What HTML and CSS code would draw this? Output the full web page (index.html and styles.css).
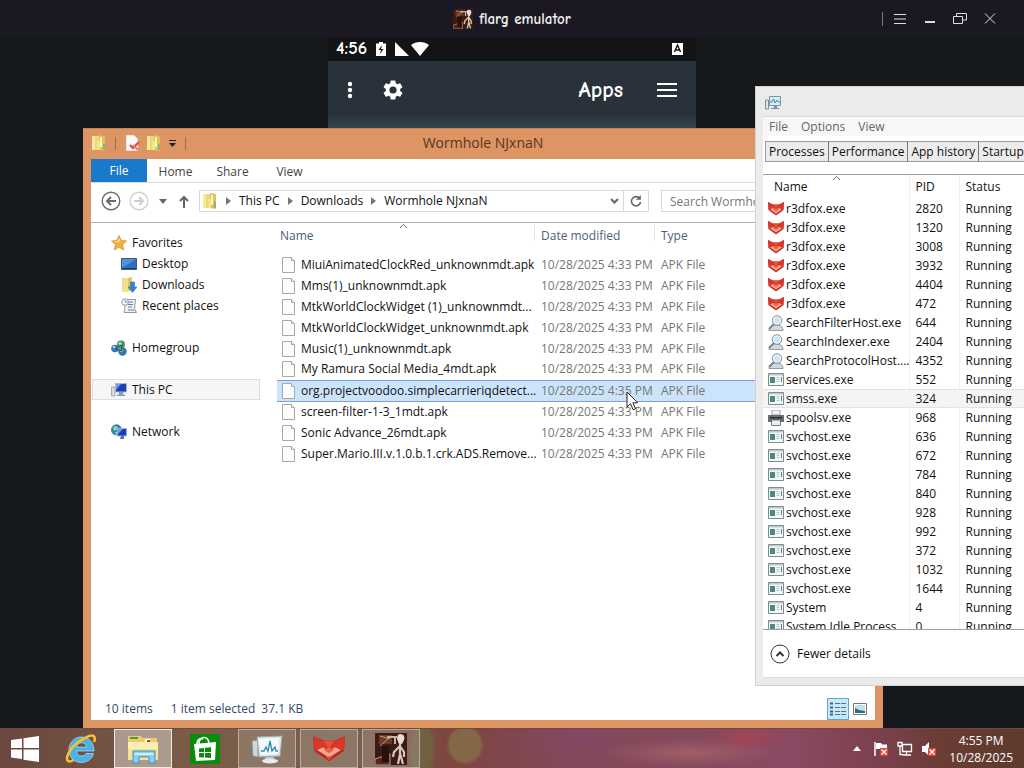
FILE: index.html
```html
<!DOCTYPE html>
<html lang="en">
<head>
<meta charset="utf-8">
<title>flarg emulator</title>
<link rel="stylesheet" href="styles.css">
</head>
<body>

<!-- icons -->
<svg class="sprite" width="0" height="0">
  <symbol id="folder" viewBox="0 0 16 16">
    <path d="M1 1h7v14H1z" fill="#ecd974"/><path d="M1 1h3v14H1z" fill="#f6eaa0"/><path d="M8 0l6 1v15l-6-1z" fill="#dcc25a"/><path d="M9 2h2v10H9z" fill="#fbf3c0"/><path d="M6 6h3v9H6z" fill="#f4e48e"/><path d="M12 9h2v6h-2z" fill="#8fb27d"/>
  </symbol>
  <symbol id="page" viewBox="0 0 16 16">
    <path d="M1.500.5h9l3 3v12h-12z" fill="#fcfcfc" stroke="#a8a8a8"/><path d="M10.500.5v3h3" fill="#eee" stroke="#a8a8a8"/>
  </symbol>
  <symbol id="props" viewBox="0 0 16 16">
    <path d="M2 0h8l4 4v12H2z" fill="#fafafa" stroke="#b9b9b9" stroke-width=".6"/><path d="M6 10l3 3 6-6" fill="none" stroke="#e0514b" stroke-width="2.400"/><path d="M9 10l5 5" stroke="#e67c76" stroke-width="2"/>
  </symbol>
  <symbol id="star" viewBox="0 0 16 16">
    <path d="M8 .5l2.300 4.900 5.200.6-3.900 3.600 1.100 5.400L8 12.300 3.300 15l1.100-5.400L.5 6l5.200-.6z" fill="#f5ae3d" stroke="#d68a24" stroke-width=".7"/><path d="M8 2.500l1.500 4-3 1-4-1 4-.5z" fill="#fcdc8a"/>
  </symbol>
  <symbol id="desktop" viewBox="0 0 16 16">
    <path d="M.5 2.500h15v11H.5z" fill="#2f6fc0" stroke="#44576e"/><path d="M1 3h14L1 12z" fill="#4f92dd"/><path d="M1 12h14v1H1z" fill="#233a58"/>
  </symbol>
  <symbol id="downloads" viewBox="0 0 16 16">
    <path d="M1 1h6v14H1z" fill="#f1e08a"/><path d="M7 1l4-1v13l-4 1z" fill="#dfc662"/><path d="M9.500 5h4v5H16l-4.500 5.500L7 10h2.500z" fill="#3585cf" stroke="#2467a8" stroke-width=".5"/>
  </symbol>
  <symbol id="recent" viewBox="0 0 16 16">
    <path d="M3 1.500h11.500l-1 9 2 4H3l1-4z" fill="#eef2f5" stroke="#8c9aa6"/><path d="M7 4h5M7 6.500h5M7 9h4M7 12h6" stroke="#6f8191"/><circle cx="4" cy="4" r="3.300" fill="#fff" stroke="#8c9aa6"/><path d="M4 2v2h2" fill="none" stroke="#6a88a2"/>
  </symbol>
  <symbol id="homegroup" viewBox="0 0 16 16">
    <circle cx="4" cy="8.500" r="3.800" fill="#3a74bd"/><circle cx="10" cy="4.500" r="4" fill="#3f8f70"/><circle cx="11.500" cy="11.500" r="4.200" fill="#3478a8"/><circle cx="9" cy="3.500" r="1.600" fill="#b9e0bd"/><circle cx="10.500" cy="10.500" r="1.600" fill="#a8d7e6"/><circle cx="3" cy="7" r="1.300" fill="#b4d2f0"/><path d="M5 9l5-4 1 6z" fill="#5bb06a" stroke="#244f4b"/>
  </symbol>
  <symbol id="pc" viewBox="0 0 16 16">
    <path d="M.5 5h3.500v9H.5z" fill="#d5dce3" stroke="#8795a3" stroke-width=".7"/><path d="M4.500 1.500h11v8.500h-11z" fill="#1f3fb5" stroke="#aab9ca"/><path d="M5 2h5l-5 6z" fill="#6f9ce8"/><path d="M8 10h4v2.500h2V14H6v-1.500h2z" fill="#8d9cad"/>
  </symbol>
  <symbol id="network" viewBox="0 0 16 16">
    <circle cx="5.500" cy="5.800" r="5.500" fill="#2f86b0"/><path d="M2 3l4-1 1 3-4 2zM4 8l3 0-2 3z" fill="#91d8b0"/><path d="M6.500 4.500h9v7.500h-9z" fill="#1b3cb8" stroke="#9db4cf"/><path d="M7 5h5l-5 5z" fill="#6f96e6"/><path d="M10 12h3v3h-4v-1.500h1z" fill="#5f7183"/>
  </symbol>
  <symbol id="fox" viewBox="0 0 16 16" preserveAspectRatio="none">
    <path d="M0 1l5 2.500h6L16 1l-.5 8L8 14.500.5 9z" fill="#b92a1e"/><path d="M0 1l5 2.800L8 8 3.500 7.500.8 9z" fill="#d8372a"/><path d="M16 1l-5 2.800L8 8l4.500-.5 2.700 1.500z" fill="#d8372a"/><path d="M5 3.500h6L8 8z" fill="#e5503f"/><path d="M2 8.500l3-1.500L8 9l3-2 3 1.500L8 12.500z" fill="#f6a48c"/><path d="M5.500 8.500L8 7l2.500 1.500L8 10.300z" fill="#e8614c"/><path d="M6 12h4l-2 2z" fill="#e04a38"/>
  </symbol>
  <symbol id="searcher" viewBox="0 0 16 16">
    <path d="M1 15.500c0-4 3-5.500 7-5.500s7 1.500 7 5.500z" fill="#d5d9dc" stroke="#80868b" stroke-width=".8"/><circle cx="9" cy="5.500" r="4.800" fill="#e9f3fa" stroke="#858f98"/><circle cx="9" cy="5.500" r="3" fill="#cfe3f2"/><path d="M6 9l-5 5" stroke="#7b858e" stroke-width="2"/>
  </symbol>
  <symbol id="exe" viewBox="0 0 16 16">
    <path d="M.5 1.500h15v12H.5z" fill="#f5f8f8" stroke="#7e8c93"/><path d="M1 2h14v1.500H1z" fill="#bdc9ce"/><path d="M2 5h5v6H2z" fill="#4a8a80"/><path d="M8.500 5.500h3M8.500 7.500h3M8.500 9.500h3" stroke="#b3c8c5"/><path d="M13.500 5v5" stroke="#5a7f89"/>
  </symbol>
  <symbol id="printer" viewBox="0 0 16 16">
    <path d="M4 0h8v5H4z" fill="#f5f6f7" stroke="#7d8285" stroke-width=".8"/><path d="M0 5h16v7H0z" fill="#6b6f72"/><path d="M2 7h12v1.500H2z" fill="#303335"/><path d="M3.500 10h9v5.500h-9z" fill="#eceeef" stroke="#55595c" stroke-width=".8"/>
  </symbol>
  <symbol id="monitor" viewBox="0 0 32 32">
    <path d="M1 8l6-1v17l-5-1z" fill="#cfd8db" stroke="#8b989d"/><path d="M6 4l25-1-2 20-21 1z" fill="#dfe6e8" stroke="#9aa7ab"/><path d="M8 6l20-1-1 16-17 1z" fill="#f2fafb"/><path d="M10 18h3l2-4 2 4 2-10 2 10 3-4 1 4h2" fill="none" stroke="#3d8cae" stroke-width="1.400"/><path d="M14 24h9v3h-9z" fill="#b8c4c8"/><ellipse cx="19" cy="28" rx="8" ry="2.500" fill="#e6ecee"/>
  </symbol>
  <symbol id="monitor-s" viewBox="0 0 16 16">
    <path d="M.5 5h3v9h-3z" fill="#dfe6e8" stroke="#7f8f96"/><path d="M4.500 1.500h11v9h-11z" fill="#d5eef5" stroke="#7f97a0"/><path d="M5 7h2l1.500-3L10 8l2-3 1.500 2H15" fill="none" stroke="#3d8cae"/><path d="M9 11h3v2h2v1H6v-1h3z" fill="#7f9299"/>
  </symbol>
  <symbol id="flarg" viewBox="0 0 32 32">
    <path d="M0 0h32v32H0z" fill="#3b1c15"/><path d="M4 2h13v9H4z" fill="#6c3a27"/><path d="M5 3l10 3M5 13l10-9M0 26l15-5v11H0z" stroke="#c49a83" fill="#572617"/><path d="M7 13h7v16H7z" fill="#25100c"/><path d="M12 4h10M20 3v8" stroke="#c9b3a6" stroke-width="2"/><path d="M25 1c4 0 5 3 4 6l-2 4h-3l-2-5c0-3 1-5 3-5z" fill="#e8ddd2"/><path d="M25 10v11l-2 10M25 20l3 11M25 13l-6 6-1 5M25 13l4 6v5" fill="none" stroke="#d8c6b8" stroke-width="2.200"/>
  </symbol>
  <symbol id="badx" viewBox="0 0 8 8">
    <path d="M0 0h8v8H0z" fill="#d9463e"/><path d="M1.500 1.500l5 5M6.500 1.500l-5 5" stroke="#fff" stroke-width="1.400"/>
  </symbol>
</svg>

<header class="emu-bar">
  <div class="emu-title"><svg width="20" height="20"><use href="#flarg"/></svg>flarg emulator</div>
  <div class="emu-btns">
    <button aria-label="Menu"><svg width="14" height="14" viewBox="0 0 14 14"><path d="M1 2.500h12M1 7h12M1 11.500h12"/></svg></button>
    <button aria-label="Minimize"><svg width="14" height="14" viewBox="0 0 14 14"><path d="M2 10h10" stroke-width="2"/></svg></button>
    <button aria-label="Restore"><svg width="14" height="14" viewBox="0 0 14 14"><path d="M.5 4.500h9v7h-9zM3.500 4V1.500h10v6.500H10"/></svg></button>
    <button aria-label="Close"><svg width="14" height="14" viewBox="0 0 14 14"><path d="M2 1.500l10 10M12 1.500l-10 10"/></svg></button>
  </div>
</header>

<main class="screen">

  <section class="phone">
    <div class="phone-status">
      <span>4:56</span>
      <svg width="10" height="14" viewBox="0 0 10 14"><path d="M3 0h4v1.500h3V14H0V1.500h3z" fill="#fff"/><path d="M6 3L2.500 8H5l-1 4 3.500-5H5z" fill="#111"/></svg>
      <svg class="signal" width="34" height="14" viewBox="0 0 34 14"><path d="M0 0v14h14z" fill="#fff"/><path d="M16 3c5-4 13-4 18 0l-9 11z" fill="#fff"/></svg>
      <svg class="kbd" width="11" height="12" viewBox="0 0 11 12"><path d="M0 0h11v12H0z" fill="#fff"/><path d="M2.500 9l3-7 3 7M3.500 7h4" fill="none" stroke="#111" stroke-width="1.400"/></svg>
    </div>
    <div class="phone-head">
      <button aria-label="More"><svg width="6" height="18" viewBox="0 0 6 18"><circle cx="3" cy="3" r="2.200"/><circle cx="3" cy="9" r="2.200"/><circle cx="3" cy="15" r="2.200"/></svg></button>
      <button aria-label="Settings"><svg width="24" height="24" viewBox="0 0 24 24"><path d="M19.140 12.940c.04-.3.060-.61.060-.94s-.02-.64-.07-.94l2.030-1.580a.49.49 0 0 0 .12-.61l-1.920-3.320a.49.49 0 0 0-.59-.22l-2.390.96a7 7 0 0 0-1.620-.94l-.36-2.540a.48.48 0 0 0-.48-.41h-3.840a.48.48 0 0 0-.47.41l-.36 2.540c-.59.24-1.130.57-1.620.94l-2.390-.96a.48.48 0 0 0-.59.22L2.740 8.870a.48.48 0 0 0 .12.61l2.030 1.580c-.05.3-.09.63-.09.94s.02.64.07.94l-2.030 1.580a.49.49 0 0 0-.12.61l1.920 3.320c.12.22.37.29.59.22l2.390-.96c.5.38 1.030.7 1.620.94l.36 2.540c.05.24.24.41.48.41h3.840c.24 0 .44-.17.470-.41l.36-2.540c.59-.24 1.130-.56 1.620-.94l2.390.96c.22.08.47 0 .59-.22l1.920-3.320a.48.48 0 0 0-.12-.61zM12 15.600A3.600 3.600 0 1 1 12 8.400a3.600 3.600 0 0 1 0 7.200z"/></svg></button>
      <h1>Apps</h1>
      <button aria-label="Menu"><svg width="20" height="14" viewBox="0 0 20 14"><path d="M0 0h20v2H0zM0 6h20v2H0zM0 12h20v2H0z"/></svg></button>
    </div>
  </section>

  <section class="explorer">
    <div class="ex-title">
      <div class="quick">
        <svg width="16" height="16"><use href="#folder"/></svg><i></i>
        <svg width="16" height="16"><use href="#props"/></svg>
        <svg width="16" height="16"><use href="#folder"/></svg>
        <svg width="9" height="9" viewBox="0 0 9 9"><path d="M1 1.500h7" stroke="#222"/><path d="M1 4h7L4.500 8z" fill="#222"/></svg><i></i>
      </div>
      <h2>Wormhole NJxnaN</h2>
    </div>
    <div class="ex-body">
      <nav class="ribbon">
        <button class="file">File</button>
        <button>Home</button>
        <button>Share</button>
        <button>View</button>
      </nav>
      <div class="address">
        <button aria-label="Back"><svg width="20" height="20" viewBox="0 0 20 20" fill="none" stroke="#6b6b6b"><circle cx="10" cy="10" r="8.800" stroke-width="1.400"/><path d="M15 10H6M10 6l-4 4 4 4" stroke-width="2"/></svg></button>
        <button aria-label="Forward"><svg width="20" height="20" viewBox="0 0 20 20" fill="none" stroke="#cfcfcf"><circle cx="10" cy="10" r="8.800" stroke-width="1.400"/><path d="M5 10h9M10 6l4 4-4 4" stroke-width="2"/></svg></button>
        <button class="hist" aria-label="Recent locations"><svg width="8" height="5" viewBox="0 0 8 5"><path d="M0 0h8L4 5z" fill="#666"/></svg></button>
        <button class="up" aria-label="Up"><svg width="10" height="13" viewBox="0 0 10 13" fill="none" stroke="#666" stroke-width="2"><path d="M5 13V2M1 6l4-4 4 4"/></svg></button>
        <div class="crumbs">
          <svg width="16" height="16"><use href="#folder"/></svg>
          <svg class="arr" width="5" height="8" viewBox="0 0 5 8"><path d="M0 0l5 4-5 4z"/></svg><a href="#">This PC</a>
          <svg class="arr" width="5" height="8" viewBox="0 0 5 8"><path d="M0 0l5 4-5 4z"/></svg><a href="#">Downloads</a>
          <svg class="arr" width="5" height="8" viewBox="0 0 5 8"><path d="M0 0l5 4-5 4z"/></svg><a href="#">Wormhole NJxnaN</a>
          <button class="drop" aria-label="Previous locations"><svg width="9" height="6" viewBox="0 0 9 6"><path d="M1 1l3.500 3.500L8 1" fill="none" stroke="#666" stroke-width="2"/></svg></button>
          <button class="refresh" aria-label="Refresh"><svg width="12" height="12" viewBox="0 0 12 12"><path d="M9.500 3.200A4.600 4.600 0 1 0 10.600 7" fill="none" stroke="#666" stroke-width="1.600"/><path d="M10.800 0v4.800H6z" fill="#666"/></svg></button>
        </div>
        <input class="search" type="text" placeholder="Search Wormhole NJxnaN" aria-label="Search">
      </div>
      <div class="panes">
        <ul class="tree">
          <li><svg width="16" height="16"><use href="#star"/></svg>Favorites</li>
          <li class="sub"><svg width="16" height="16"><use href="#desktop"/></svg>Desktop</li>
          <li class="sub"><svg width="16" height="16"><use href="#downloads"/></svg>Downloads</li>
          <li class="sub"><svg width="16" height="16"><use href="#recent"/></svg>Recent places</li>
          <li class="top"><svg width="16" height="16"><use href="#homegroup"/></svg>Homegroup</li>
          <li class="top on"><svg width="16" height="16"><use href="#pc"/></svg>This PC</li>
          <li class="top"><svg width="16" height="16"><use href="#network"/></svg>Network</li>
        </ul>
        <div class="list">
        <table class="files">
          <colgroup><col class="c-name"><col class="c-date"><col></colgroup>
          <thead>
            <tr><th>Name<svg class="sort" width="7" height="4" viewBox="0 0 7 4"><path d="M0 4l3.500-3.500L7 4" fill="none" stroke="#667"/></svg></th><th>Date modified</th><th>Type</th></tr>
          </thead>
          <tbody>
            <tr><td><svg width="16" height="16"><use href="#page"/></svg>MiuiAnimatedClockRed_unknownmdt.apk</td><td>10/28/2025 4:33 PM</td><td>APK File</td></tr>
            <tr><td><svg width="16" height="16"><use href="#page"/></svg>Mms(1)_unknownmdt.apk</td><td>10/28/2025 4:33 PM</td><td>APK File</td></tr>
            <tr><td><svg width="16" height="16"><use href="#page"/></svg>MtkWorldClockWidget (1)_unknownmdt...</td><td>10/28/2025 4:33 PM</td><td>APK File</td></tr>
            <tr><td><svg width="16" height="16"><use href="#page"/></svg>MtkWorldClockWidget_unknownmdt.apk</td><td>10/28/2025 4:33 PM</td><td>APK File</td></tr>
            <tr><td><svg width="16" height="16"><use href="#page"/></svg>Music(1)_unknownmdt.apk</td><td>10/28/2025 4:33 PM</td><td>APK File</td></tr>
            <tr><td><svg width="16" height="16"><use href="#page"/></svg>My Ramura Social Media_4mdt.apk</td><td>10/28/2025 4:33 PM</td><td>APK File</td></tr>
            <tr class="on"><td><svg width="16" height="16"><use href="#page"/></svg>org.projectvoodoo.simplecarrieriqdetect...</td><td>10/28/2025 4:35 PM</td><td>APK File</td></tr>
            <tr><td><svg width="16" height="16"><use href="#page"/></svg>screen-filter-1-3_1mdt.apk</td><td>10/28/2025 4:33 PM</td><td>APK File</td></tr>
            <tr><td><svg width="16" height="16"><use href="#page"/></svg>Sonic Advance_26mdt.apk</td><td>10/28/2025 4:33 PM</td><td>APK File</td></tr>
            <tr><td><svg width="16" height="16"><use href="#page"/></svg>Super.Mario.III.v.1.0.b.1.crk.ADS.Remove...</td><td>10/28/2025 4:33 PM</td><td>APK File</td></tr>
          </tbody>
        </table>
        </div>
      </div>
      <div class="ex-status">
        <span>10 items</span><span>1 item selected</span><span>37.1 KB</span>
        <div class="views">
          <button class="on" aria-label="Details"><svg width="16" height="14" viewBox="0 0 16 14"><path d="M0 1.500h3M0 5.500h3M0 9.500h3M0 12.500h3" stroke="#466" stroke-width="2"/><path d="M5 1.500h5M5 5.500h5M5 9.500h5M5 12.500h5M11 1.500h5M11 5.500h5M11 9.500h5M11 12.500h5" stroke="#5b7480"/></svg></button>
          <button aria-label="Large icons"><svg width="14" height="12" viewBox="0 0 14 12"><path d="M.5.5h13v11H.5z" fill="#fff" stroke="#777"/><path d="M2 2h10v8H2z" fill="#bfe0ee"/><path d="M2 5l4 2 6 1v2H2z" fill="#36687c"/></svg></button>
        </div>
      </div>
    </div>
  </section>

  <section class="taskmgr">
    <div class="tm-title"><svg width="16" height="16"><use href="#monitor-s"/></svg></div>
    <div class="tm-body">
      <div class="tm-menu"><button>File</button><button>Options</button><button>View</button></div>
      <div class="tm-tabs"><button>Processes</button><button>Performance</button><button>App history</button><button>Startup</button></div>
      <div class="tm-list">
        <table>
          <colgroup><col class="c-proc"><col class="c-pid"><col></colgroup>
          <thead>
            <tr><th>Name<svg class="sort" width="7" height="4" viewBox="0 0 7 4"><path d="M0 4l3.500-3.500L7 4" fill="none" stroke="#667"/></svg></th><th>PID</th><th>Status</th></tr>
          </thead>
          <tbody>
            <tr><td><svg width="16" height="16"><use href="#fox"/></svg>r3dfox.exe</td><td>2820</td><td>Running</td></tr>
            <tr><td><svg width="16" height="16"><use href="#fox"/></svg>r3dfox.exe</td><td>1320</td><td>Running</td></tr>
            <tr><td><svg width="16" height="16"><use href="#fox"/></svg>r3dfox.exe</td><td>3008</td><td>Running</td></tr>
            <tr><td><svg width="16" height="16"><use href="#fox"/></svg>r3dfox.exe</td><td>3932</td><td>Running</td></tr>
            <tr><td><svg width="16" height="16"><use href="#fox"/></svg>r3dfox.exe</td><td>4404</td><td>Running</td></tr>
            <tr><td><svg width="16" height="16"><use href="#fox"/></svg>r3dfox.exe</td><td>472</td><td>Running</td></tr>
            <tr><td><svg width="16" height="16"><use href="#searcher"/></svg>SearchFilterHost.exe</td><td>644</td><td>Running</td></tr>
            <tr><td><svg width="16" height="16"><use href="#searcher"/></svg>SearchIndexer.exe</td><td>2404</td><td>Running</td></tr>
            <tr><td><svg width="16" height="16"><use href="#searcher"/></svg>SearchProtocolHost....</td><td>4352</td><td>Running</td></tr>
            <tr><td><svg width="16" height="16"><use href="#exe"/></svg>services.exe</td><td>552</td><td>Running</td></tr>
            <tr class="on"><td><svg width="16" height="16"><use href="#exe"/></svg>smss.exe</td><td>324</td><td>Running</td></tr>
            <tr><td><svg width="16" height="16"><use href="#printer"/></svg>spoolsv.exe</td><td>968</td><td>Running</td></tr>
            <tr><td><svg width="16" height="16"><use href="#exe"/></svg>svchost.exe</td><td>636</td><td>Running</td></tr>
            <tr><td><svg width="16" height="16"><use href="#exe"/></svg>svchost.exe</td><td>672</td><td>Running</td></tr>
            <tr><td><svg width="16" height="16"><use href="#exe"/></svg>svchost.exe</td><td>784</td><td>Running</td></tr>
            <tr><td><svg width="16" height="16"><use href="#exe"/></svg>svchost.exe</td><td>840</td><td>Running</td></tr>
            <tr><td><svg width="16" height="16"><use href="#exe"/></svg>svchost.exe</td><td>928</td><td>Running</td></tr>
            <tr><td><svg width="16" height="16"><use href="#exe"/></svg>svchost.exe</td><td>992</td><td>Running</td></tr>
            <tr><td><svg width="16" height="16"><use href="#exe"/></svg>svchost.exe</td><td>372</td><td>Running</td></tr>
            <tr><td><svg width="16" height="16"><use href="#exe"/></svg>svchost.exe</td><td>1032</td><td>Running</td></tr>
            <tr><td><svg width="16" height="16"><use href="#exe"/></svg>svchost.exe</td><td>1644</td><td>Running</td></tr>
            <tr><td><svg width="16" height="16"><use href="#exe"/></svg>System</td><td>4</td><td>Running</td></tr>
            <tr><td><svg width="16" height="16"><use href="#exe"/></svg>System Idle Process</td><td>0</td><td>Running</td></tr>
          </tbody>
        </table>
      </div>
      <div class="tm-foot">
        <button><svg width="20" height="20" viewBox="0 0 20 20" fill="none" stroke="#333"><circle cx="10" cy="10" r="9"/><path d="M6.500 12L10 8.500l3.500 3.500" stroke-width="2"/></svg>Fewer details</button>
      </div>
    </div>
  </section>

  <svg class="cursor" width="13" height="20" viewBox="0 0 13 20"><path d="M1 1v15l3.500-3.300 2.600 6 2.400-1-2.600-5.900h4.800z" fill="#fff" stroke="#222"/></svg>
</main>

<footer class="taskbar">
  <button class="tb start" aria-label="Start"><svg width="28" height="26" viewBox="0 0 28 26"><path d="M0 4l11-1.600V12H0zM12.500 2.200L28 0v12H12.500zM0 13.500h11V23L0 21.600zM12.500 13.500H28V26l-15.500-2.200z" fill="#fff"/></svg></button>
  <button class="tb" aria-label="Internet Explorer"><svg width="32" height="32" viewBox="0 0 32 32"><path d="M29 18H11.500c.3 3.200 2.300 5 5 5 2 0 3.500-1 4.500-2.500h7.500C27 26 22.500 29.500 16.500 29.500 9 29.500 4 24.300 4 17S9.200 4 16.500 4 29 9.500 29 18zM11.700 14h10c-.3-2.500-2.200-4.200-5-4.200s-4.600 1.700-5 4.200z" fill="#48b3e8" stroke="#b5e4f8" stroke-width=".7"/><path d="M29 9c2-5 0-8-6-5.500C14 7 5 15 2.500 23c-1.500 5 1 7 6 4" fill="none" stroke="#f5c22d" stroke-width="2.600"/></svg></button>
  <button class="tb run active" aria-label="File Explorer"><svg width="32" height="32" viewBox="0 0 32 32"><path d="M1 3h13l2 2h14v8H1z" fill="#e8cf6c"/><path d="M3 4h8v2H3z" fill="#3f9b53"/><path d="M18 6h5v3h-5z" fill="#fff"/><path d="M20 7h3v2h-3z" fill="#b8402f"/><path d="M1 9h30v18H1z" fill="#f4e38f"/><path d="M1 9h30v7H1z" fill="#faefb0"/><path d="M6 18h22v12h-6v-6H12v6H6z" fill="#8ccdf0" stroke="#3b93ca"/><path d="M8 20h18v2H8z" fill="#d3eefb"/></svg></button>
  <button class="tb" aria-label="Store"><svg width="30" height="30" viewBox="0 0 30 30"><path d="M0 0h30v30H0z" fill="#0c8a0c"/><path d="M4 10l22-2-1 18-19 1z" fill="#fff"/><path d="M9 10c0-8 9-9 10-1M7 10c0-5 4-6 6-5" fill="none" stroke="#fff" stroke-width="1.600"/><path d="M9 14.500l5-.6v4H9zM15 13.800l6-.6v4.700h-6zM9 19h5v4.500l-5-.3zM15 19h6v5l-6-.4z" fill="#0c8a0c"/></svg></button>
  <button class="tb run" aria-label="Task Manager"><svg width="32" height="32"><use href="#monitor"/></svg></button>
  <button class="tb run" aria-label="r3dfox"><svg width="32" height="30"><use href="#fox"/></svg></button>
  <button class="tb run" aria-label="flarg emulator"><svg width="32" height="32"><use href="#flarg"/></svg></button>
  <div class="tray">
    <svg width="8" height="5" viewBox="0 0 8 5"><path d="M0 5l4-5 4 5z" fill="#fff"/></svg>
    <svg width="16" height="16" viewBox="0 0 16 16"><path d="M2 1v14" stroke="#fff" stroke-width="1.500"/><path d="M3 2h5l1 1.500h5V9H8L7 8H3z" fill="#fff"/><use href="#badx" x="7" y="7" width="8" height="8"/></svg>
    <svg width="16" height="16" viewBox="0 0 16 16" fill="none" stroke="#fff"><path d="M5.500 3.500h9v7h-9zM9.500 11v2.500M6 14h8M1 1.500h4V5H1zM3 5v8.500h3" stroke-width="1.300"/></svg>
    <svg width="16" height="16" viewBox="0 0 16 16"><path d="M1 5h3l4-4v14l-4-4H1z" fill="#fff"/><use href="#badx" x="7" y="7" width="8" height="8"/></svg>
  </div>
  <div class="clock"><span>4:55 PM</span><span>10/28/2025</span></div>
</footer>

</body>
</html>
```

FILE: styles.css
```css
*{margin:0;padding:0;box-sizing:border-box;}
body{height:100vh;display:flex;flex-direction:column;overflow:hidden;background:#16191c;font:12px/16px "Open Sans","Noto Sans",sans-serif;color:#111;}
button{border:0;background:none;font:inherit;color:inherit;display:flex;align-items:center;justify-content:center;}
a{color:inherit;text-decoration:none;}
svg{display:block;flex:none;}
.sprite{position:absolute;}
table{border-collapse:collapse;table-layout:fixed;width:100%;}
th{font-weight:400;text-align:left;}
td{white-space:nowrap;}
td svg{display:inline-block;vertical-align:-4px;}

/* emulator frame */
.emu-bar{height:37px;flex:none;display:grid;grid-template-columns:1fr auto 1fr;align-items:center;background:#1b1824;color:#eee;}
.emu-title{grid-column:2;display:flex;align-items:center;gap:6px;font:bold 15px/20px "Comic Neue","Noto Sans",sans-serif;}
.emu-btns{display:flex;justify-content:flex-end;gap:16px;padding-right:27px;}
.emu-btns:before{content:"";width:1px;height:14px;background:#777;margin-right:-6px;}
.emu-btns svg{fill:none;stroke:#ddd;}

.screen{flex:1;position:relative;overflow:hidden;min-height:0;}
.phone{width:368px;height:100%;margin:0 auto;background:#29323b;color:#fff;}
.phone-status{height:24px;background:#121416;display:flex;align-items:center;gap:9px;padding:0 13px 0 8px;font:bold 18px/20px "Comic Neue","Noto Sans",sans-serif;}
.kbd{margin-left:auto;}
.phone-head{height:67px;background:linear-gradient(#29343a,#29313b 20%,#29313b 80%,#34474c);display:flex;align-items:center;gap:28px;padding:0 19px 10px;}
.phone-head svg{fill:#fff;}
.phone-head h1{margin-left:auto;padding-right:6px;font:bold 22px/28px "Comic Neue","Noto Sans",sans-serif;}

/* explorer window */
.explorer{position:absolute;left:83px;top:91px;width:800px;height:600px;display:flex;flex-direction:column;background:#dd9563;padding:0 8px 8px;border:1px solid #c98352;border-width:1px 0 0;}
.ex-title{height:30px;flex:none;display:grid;grid-template-columns:1fr auto 1fr;align-items:center;padding-bottom:2px;}
.ex-title h2{font:14px/20px "Open Sans","Noto Sans",sans-serif;color:#5b3620;}
.quick{display:flex;align-items:center;gap:6px;}
.quick i{width:1px;height:13px;background:#a86c44;margin:0 2px;}
.ex-body{flex:1;min-height:0;display:flex;flex-direction:column;background:#fff;}
.ribbon{height:24px;flex:none;display:flex;border-bottom:1px solid #dadbdc;color:#444;}
.ribbon button{width:57px;padding-top:2px;}
.ribbon .file{width:56px;background:#1979ca;color:#fff;padding:0;}
.address{height:40px;flex:none;display:flex;align-items:center;gap:8px;padding:0 8px 3px 10px;border-bottom:1px solid #a9b0b6;}
.address .hist{margin:0 4px 0 2px;}
.address .up{margin-right:2px;}
.crumbs{flex:1;height:22px;display:flex;align-items:center;gap:8px;border:1px solid #d9d9d9;padding-left:2px;margin-right:4px;}
.arr{fill:#777;}
.crumbs a{white-space:nowrap;}
.crumbs .drop{margin-left:auto;}
.crumbs .refresh{align-self:stretch;width:25px;border-left:1px solid #d9d9d9;margin-left:-4px;}
.search{width:206px;height:22px;border:1px solid #d9d9d9;padding-left:8px;font:inherit;}
.search::placeholder{color:#777;opacity:1;}
.panes{flex:1;min-height:0;display:flex;align-items:flex-start;}
.tree{width:186px;flex:none;list-style:none;padding:9px 17px 0 1px;}
.tree li{height:21px;display:flex;align-items:center;gap:5px;padding-left:19px;}
.tree .sub{padding-left:29px;}
.tree .top{margin-top:21px;}
.tree .on{background:#f6f6f6;box-shadow:inset 0 0 0 1px #dedede;}
.list{flex:1;min-width:0;}
.files{color:#777;}
.files .c-name{width:257px;}
.files .c-date{width:120px;}
.files th{height:27px;position:relative;padding:0 0 1px 7px;color:#4c607a;}
.files th:first-child{padding-left:3px;}
.files th+th:before{content:"";position:absolute;left:0;top:2px;height:16px;border-left:1px solid #e2e2e2;}
.sort{position:absolute;left:48%;top:1px;}
.files tbody:before{content:"";display:block;height:4px;}
.files td{height:21px;padding-left:7px;}
.files td:first-child{padding-left:4px;color:#111;}
.files td svg{margin-right:4px;}
.files .on td{background:#cce4fb;border:solid #7da2ce;border-width:1px 0;}
.ex-status{height:22px;flex:none;display:flex;align-items:center;gap:6px;padding:0 4px 0 14px;color:#34496b;}
.ex-status span:first-child{margin-right:12px;}
.views{margin-left:auto;display:flex;}
.views button{width:22px;height:22px;}
.views .on{background:#c5e8fa;border:1px solid #62a5d1;}

/* task manager window */
.taskmgr{position:absolute;left:755px;top:49px;width:660px;height:600px;display:flex;flex-direction:column;padding:0 8px 7px 7px;background:#ebebeb;border:1px solid #d2d2d2;border-right:0;}
.tm-title{height:29px;flex:none;display:flex;align-items:center;padding:2px 2px 0;}
.tm-body{flex:1;min-height:0;display:flex;flex-direction:column;background:#fff;border:1px solid #dcdcdc;border-width:1px 0;}
.tm-menu{height:19px;flex:none;display:flex;gap:13px;padding-left:6px;background:#f7f7f7;color:#666;}
.tm-tabs{display:flex;padding:5px 2px 12px;}
.tm-tabs button{height:21px;padding:0 3px;border:1px solid #9c9c9c;border-right-color:#777;background:#ececec;color:#111;}
.tm-tabs button+button{border-left:0;}
.tm-list{flex:1;min-height:0;overflow:hidden;border:1px solid #a0a0a0;border-width:1px 0;}
.c-proc{width:146px;}
.c-pid{width:50px;}
.tm-list th{height:24px;padding-left:6px;position:relative;border-right:1px solid #eee;}
.tm-list th:first-child{padding-left:11px;}
.tm-list td{height:19px;padding-left:6px;border-right:1px solid #f1f1f1;}
.tm-list td:first-child{padding-left:5px;}
.tm-list td svg{margin-right:2px;}
.tm-list .on td{background:#f4f4f4;box-shadow:inset 0 1px #e3e3e3,inset 0 -1px #e3e3e3;}
.tm-foot{height:47px;flex:none;display:flex;align-items:center;padding-left:7px;}
.tm-foot button{gap:7px;}

.cursor{position:absolute;left:626px;top:354px;}

/* taskbar */
.taskbar{height:40px;flex:none;display:flex;align-items:center;gap:4px;color:#fff;border-top:1px solid #6b4c42;
	background:
	radial-gradient(ellipse 19px 20px at 465px 16px,rgba(133,112,72,.8) 80%,transparent),
	radial-gradient(ellipse 14px 30px at 422px 20px,rgba(109,106,64,.7) 70%,transparent),
	radial-gradient(ellipse 90px 14px at 690px 24px,rgba(172,104,110,.7),transparent),
	radial-gradient(ellipse 40px 14px at 745px 8px,rgba(176,66,84,.7),transparent),
	radial-gradient(ellipse 60px 20px at 580px 8px,rgba(130,70,110,.5),transparent),
	linear-gradient(90deg,#6b473f,#7a5d47 20%,#78604f 35%,#7d453f 44%,#83485a 55%,#85495c 70%,#8a4a63 77%,#7b404d 86%,#6a3c34 92%,#5d3a2c);}
.tb{width:58px;height:39px;}
.start{width:48px;padding-left:2px;}
.tb.run{background:rgba(255,255,255,.15);border:1px solid rgba(255,255,255,.4);}
.tb.active{background:rgba(255,255,255,.4);border-color:#f5ead8;}
.tray{margin-left:auto;display:flex;align-items:center;gap:8px;padding-right:8px;}
.tray svg:first-child{margin-right:4px;}
.clock{display:flex;flex-direction:column;align-items:center;padding-right:11px;line-height:17px;}
```
